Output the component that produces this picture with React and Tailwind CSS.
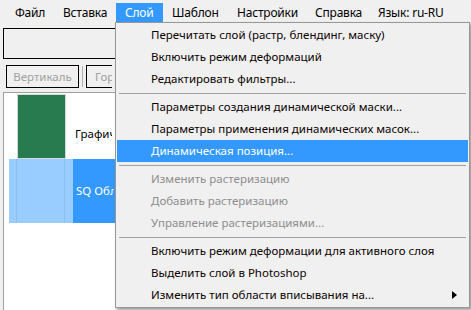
import React from "react";

const FONT = { fontFamily: '"Noto Sans", "Segoe UI", Arial, sans-serif' };

const MENU_BAR = [
  { label: "Файл", w: "w-[48px]" },
  { label: "Вставка", w: "w-[62px]" },
  { label: "Слой", w: "w-[47px]", active: true },
  { label: "Шаблон", w: "w-[65px]" },
  { label: "Настройки", w: "w-[78px]" },
  { label: "Справка", w: "w-[63px]" },
  { label: "Язык: ru-RU", w: "w-[90px]" },
];

const ITEMS = [
  { label: "Перечитать слой (растр, блендинг, маску)" },
  { label: "Включить режим деформаций" },
  { label: "Редактировать фильтры..." },
  { sep: true },
  { label: "Параметры создания динамической маски..." },
  { label: "Параметры применения динамических масок..." },
  { label: "Динамическая позиция...", active: true },
  { sep: true },
  { label: "Изменить растеризацию", disabled: true },
  { label: "Добавить растеризацию", disabled: true },
  { label: "Управление растеризациями...", disabled: true },
  { sep: true },
  { label: "Включить режим деформации для активного слоя" },
  { label: "Выделить слой в Photoshop" },
  { label: "Изменить тип области вписывания на...", sub: true },
];

function MenuItem({ item }) {
  if (item.sep) {
    return (
      <div className="h-[6px] flex items-center px-[2px]">
        <div className="h-px w-full bg-[#a0a0a0]" />
      </div>
    );
  }
  const color = item.active ? "bg-[#3399ff] text-white" : item.disabled ? "text-[#8d8d8d]" : "text-[#0a0000]";
  return (
    <div className={`relative h-[22px] flex items-center pl-[34px] ${color}`}>
      <span className="whitespace-nowrap">{item.label}</span>
      {item.sub && (
        <svg className="absolute right-[11px] top-[7px]" width="5" height="8" viewBox="0 0 5 8">
          <path d="M0 0 L5 4 L0 8 Z" fill="#000" />
        </svg>
      )}
    </div>
  );
}

export default function App() {
  return (
    <div className="relative w-[471px] h-[310px] overflow-hidden bg-[#f0f0f0] text-[11.5px]" style={FONT}>
      {/* menu bar */}
      <div className="h-[22px] flex items-stretch pl-[6px] pt-[3px] text-[12px]">
        {MENU_BAR.map((m) => (
          <div
            key={m.label}
            className={`${m.w} pl-[9px] flex items-center whitespace-nowrap tracking-[-0.2px] ${m.active ? "bg-[#3399ff] text-white" : "text-black"}`}
          >
            {m.label}
          </div>
        ))}
      </div>

      {/* left side, partly hidden by the open menu */}
      <div className="w-[115px] overflow-hidden">
        <div className="w-[300px]">
          <div className="pl-[3px] pt-[6px]">
            <div className="w-[140px] h-[31px] border border-black bg-[#f0f0f0]" />
            <div className="flex items-center mt-[6px] pl-[3px] gap-[3px]">
              <div className="w-[73px] h-[23px] border border-black flex items-center justify-center text-[#a0a0a0]">Вертикаль</div>
              <div className="w-px h-[21px] bg-[#b0b0b0]" />
              <div className="w-[26px] h-[23px] border-l border-y border-black flex items-center pl-[8px] text-[#a0a0a0] overflow-hidden whitespace-nowrap">Гори</div>
            </div>
          </div>

          <div className="ml-[3px] mt-[4px] h-[220px] border-l border-t border-[#a0a0a0] bg-white">
            <div className="flex items-center h-[66px] pl-[13px]">
              <div className="w-[49px] h-[65px] border border-[#d8d8d8] bg-[#287a4f] mt-[1px]" />
              <span className="ml-[9px] mt-[16px] w-[37px] overflow-hidden whitespace-nowrap text-black">Графиче</span>
            </div>
            <div className="flex h-[64px] ml-[5px]">
              <div className="w-[64px] bg-[#99ccff] flex">
                <div className="w-[8px] border-r border-[#88bff5]" />
                <div className="w-[48px] border-r border-[#88bff5]" />
              </div>
              <div className="flex-1 bg-[#3399ff] text-white flex items-center pl-[3px]">
                <span className="w-[38px] overflow-hidden whitespace-nowrap">SQ Обла</span>
              </div>
            </div>
          </div>
        </div>
      </div>

      {/* open dropdown */}
      <div className="absolute left-[115px] top-[22px] w-[355px] border border-[#979797] bg-[#f0f0f0] p-[1px] shadow-[2px_2px_3px_rgba(0,0,0,0.35)]">
        {ITEMS.map((it, i) => (
          <MenuItem key={i} item={it} />
        ))}
      </div>
    </div>
  );
}
